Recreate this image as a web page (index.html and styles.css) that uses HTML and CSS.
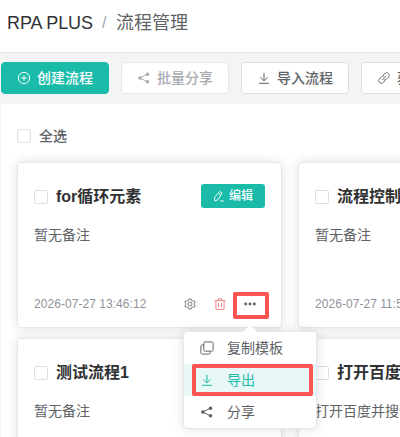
FILE: index.html
```html
<!DOCTYPE html>
<html lang="zh-CN">
<head>
<meta charset="utf-8">
<title>流程管理</title>
<link rel="stylesheet" href="styles.css">
</head>
<body>
<svg class="defs" aria-hidden="true">
  <symbol id="share" viewBox="0 0 14 14"><path d="M2.8 7 10.7 3M2.8 7l7.9 4" fill="none" stroke="currentColor"/><circle cx="2.9" cy="7" r="1.8"/><circle cx="10.5" cy="3.2" r="1.8"/><circle cx="10.5" cy="10.8" r="1.8"/></symbol>
  <symbol id="download" viewBox="0 0 14 14"><path d="M7 1.8v8M3.4 6.3 7 9.9l3.6-3.6M2 12.3h10" fill="none" stroke="currentColor"/></symbol>
</svg>
<header class="header"><span class="brand">RPA PLUS</span><span class="slash">/</span><span class="page">流程管理</span></header>
<nav class="toolbar">
  <button class="btn primary"><svg viewBox="0 0 14 14"><g fill="none" stroke="currentColor"><circle cx="7" cy="7" r="5.6"/><path d="M4.2 7h5.6M7 4.2v5.6"/></g></svg>创建流程</button>
  <button class="btn disabled"><svg><use href="#share"/></svg>批量分享</button>
  <button class="btn"><svg><use href="#download"/></svg>导入流程</button>
  <button class="btn"><svg viewBox="0 0 14 14"><g fill="none" stroke="currentColor" stroke-width=".9"><path d="M5.3 8.7 8.7 5.3"/><path d="M5.7 4.6 7.9 2.5a2.5 2.5 0 0 1 3.6 3.6L9.4 8.3a2.5 2.5 0 0 1-2.6.6M8.3 9.4l-2.2 2.1a2.5 2.5 0 0 1-3.6-3.6l2.1-2.2a2.5 2.5 0 0 1 2.6-.6"/></g></svg>获取流程</button>
</nav>
<main class="panel">
  <label class="all"><i class="check"></i>全选</label>
  <div class="grid">
    <section class="card">
      <div class="head"><i class="check"></i><h3>for循环元素</h3><button class="edit"><svg viewBox="0 0 12 12"><path d="M6.5 1.5 9 3 5 9.7 1.9 11l-.5-3.3ZM5.3 3.4l2.5 1.5M7 11h4.2" fill="none" stroke="currentColor" stroke-width=".9"/></svg>编辑</button></div>
      <p>暂无备注</p>
      <div class="foot"><time>2026-07-27 13:46:12</time>
        <div class="actions">
          <svg viewBox="0 0 14 14"><g fill="none" stroke="currentColor"><path d="m5.7 1.1-.5 1.8-1.1.7-1.9-.5L.9 5.3 2.3 6.5v1L.9 8.7l1.3 2.2 1.9-.5 1.1.7.5 1.8h2.6l.5-1.8 1.1-.7 1.9.5 1.3-2.2-1.4-1.2v-1l1.4-1.2-1.3-2.2-1.9.5-1.1-.7-.5-1.8Z"/><circle cx="7" cy="7" r="2.3"/></g></svg>
          <svg class="danger" viewBox="0 0 14 14"><path d="M.6 3.1h12.8M4.8 3V1h4.4v2M2.2 3.3v9.9h9.6V3.3M5.3 5.8v4.7M8.7 5.8v4.7" fill="none" stroke="currentColor"/></svg>
          <div class="more"><svg viewBox="0 0 14 14"><circle cx="2" cy="7" r="1.7"/><circle cx="7" cy="7" r="1.7"/><circle cx="12" cy="7" r="1.7"/></svg>
            <div class="menu">
              <div class="item"><svg viewBox="0 0 14 14"><g fill="none" stroke="currentColor"><rect x="3.8" y=".9" width="9.3" height="9.3" rx="1.5"/><path d="M3.8 3.8H2.4A1.5 1.5 0 0 0 .9 5.3v6.3a1.5 1.5 0 0 0 1.5 1.5h6.3a1.5 1.5 0 0 0 1.5-1.5v-1.4"/></g></svg>复制模板</div>
              <div class="item active"><svg><use href="#download"/></svg>导出</div>
              <div class="item"><svg><use href="#share"/></svg>分享</div>
            </div>
          </div>
        </div>
      </div>
    </section>
    <section class="card">
      <div class="head"><i class="check"></i><h3>流程控制</h3></div>
      <p>暂无备注</p>
      <div class="foot"><time>2026-07-27 11:53:20</time></div>
    </section>
    <section class="card">
      <div class="head"><i class="check"></i><h3>测试流程1</h3></div>
      <p>暂无备注</p>
    </section>
    <section class="card">
      <div class="head"><i class="check"></i><h3>打开百度</h3></div>
      <p>打开百度并搜索</p>
    </section>
  </div>
</main>
</body>
</html>
```
FILE: styles.css
```css
* { box-sizing: border-box; }
html, body { height: 100%; overflow: hidden; }
body { margin: 0; background: #f4f4f4; color: #606266; font: 14px/20px "Liberation Sans", "Noto Sans CJK SC", sans-serif; display: flex; flex-direction: column; }
svg { width: 14px; height: 14px; fill: currentColor; flex: none; }
button { font: inherit; }
.defs { position: absolute; width: 0; height: 0; }
.header { flex: none; height: 53px; padding: 0 7px 6px; background: #fff; border-bottom: 1px solid #e6e6e6; display: flex; align-items: center; font-size: 18px; }
.brand { color: #303133; letter-spacing: -.1px; }
.slash { width: 23px; padding-left: 9px; font-size: 16px; color: #a0a4ac; }
.toolbar { flex: none; display: flex; gap: 12px; padding: 9px 0 10px 1px; }
.btn { flex: none; width: 108px; height: 32px; padding: 0 0 1px; border: 1px solid #dcdfe6; border-radius: 4px; background: #fff; color: #606266; font-weight: 500; display: flex; align-items: center; justify-content: center; gap: 6px; white-space: nowrap; }
.primary { background: #1abba9; border-color: #1abba9; color: #fff; }
.disabled { color: #a8abb2; border-color: #e4e7ed; }
.panel { flex: none; width: 700px; height: 500px; margin-left: 1px; padding: 16px; background: #fff; }
.all { display: flex; align-items: center; gap: 8px; height: 32px; font-weight: 500; }
.check { width: 14px; height: 14px; border: 1px solid #dcdfe6; border-radius: 2px; background: #fff; flex: none; }
.grid { display: grid; grid-template-columns: 265px 265px; grid-auto-rows: 166px; gap: 10px 16px; margin-top: 10px; }
.card { border: 1px solid #e4e7ed; border-radius: 4px; background: #fff; box-shadow: 0 0 12px rgba(0,0,0,.12); padding: 20px 16px 13px; display: flex; flex-direction: column; }
.head { display: flex; align-items: center; height: 26px; gap: 8px; }
.head .check { margin-top: 2px; }
h3 { margin: 2px 0 0; font-size: 16px; line-height: 24px; color: #303133; white-space: nowrap; }
.edit { width: 64px; height: 24px; margin: 0 0 0 auto; padding: 0; border: 0; border-radius: 3px; background: #1abba9; color: #fff; font-size: 12px; font-weight: 500; display: flex; align-items: center; justify-content: center; gap: 4px; }
.edit svg { width: 12px; height: 12px; }
p { margin: 16px 0 0; white-space: nowrap; }
.foot { margin-top: auto; height: 20px; display: flex; align-items: center; justify-content: space-between; font-size: 12px; }
time { color: #909399; font-size: 12px; letter-spacing: .05px; }
.actions { display: flex; align-items: center; }
.actions > svg, .more > svg { width: 12px; height: 12px; }
.danger { color: #f27474; margin-left: 18px; }
.more { position: relative; width: 36px; height: 27px; margin: 2px -4px 0 7px; border: 4px solid #fc5353; border-radius: 2px; display: flex; align-items: center; justify-content: center; padding: 0 2px 2px 0; }
.menu { position: absolute; z-index: 2; top: 35px; left: -54px; width: 134px; height: 98px; padding: 0; border: 1px solid #e4e7ed; border-radius: 4px; background: #fff; box-shadow: 0 0 12px rgba(0,0,0,.12); font-size: 14px; }
.menu::before { content: ""; position: absolute; left: 61px; top: -5px; width: 10px; height: 10px; background: #fff; transform: rotate(45deg); border-radius: 2px 0 0; }
.item { position: relative; height: 32px; display: flex; align-items: center; gap: 13px; padding-left: 16px; white-space: nowrap; }
.active { background: #e8f8f6; color: #1abba9; }
.active::after { content: ""; position: absolute; inset: 0 3px 0 8px; border: 4px solid #fc5353; border-radius: 2px; }
```
